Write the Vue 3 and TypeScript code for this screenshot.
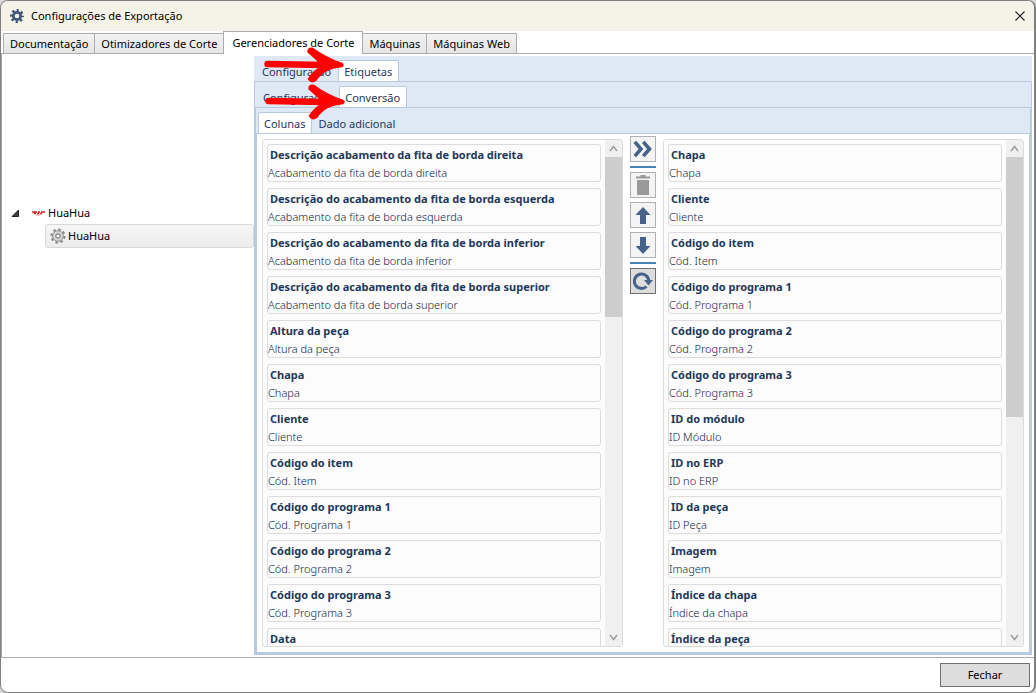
<script setup lang="ts">
interface Column {
  title: string
  label?: string
}

interface Tab {
  name: string
  active: boolean
}

const mainTabs: Tab[] = [
  { name: 'Documentação', active: false },
  { name: 'Otimizadores de Corte', active: false },
  { name: 'Gerenciadores de Corte', active: true },
  { name: 'Máquinas', active: false },
  { name: 'Máquinas Web', active: false },
]

const available: Column[] = [
  { title: 'Descrição acabamento da fita de borda direita', label: 'Acabamento da fita de borda direita' },
  { title: 'Descrição do acabamento da fita de borda esquerda', label: 'Acabamento da fita de borda esquerda' },
  { title: 'Descrição do acabamento da fita de borda inferior', label: 'Acabamento da fita de borda inferior' },
  { title: 'Descrição do acabamento da fita de borda superior', label: 'Acabamento da fita de borda superior' },
  { title: 'Altura da peça', label: 'Altura da peça' },
  { title: 'Chapa', label: 'Chapa' },
  { title: 'Cliente', label: 'Cliente' },
  { title: 'Código do item', label: 'Cód. Item' },
  { title: 'Código do programa 1', label: 'Cód. Programa 1' },
  { title: 'Código do programa 2', label: 'Cód. Programa 2' },
  { title: 'Código do programa 3', label: 'Cód. Programa 3' },
  { title: 'Data' },
]

const chosen: Column[] = [
  { title: 'Chapa', label: 'Chapa' },
  { title: 'Cliente', label: 'Cliente' },
  { title: 'Código do item', label: 'Cód. Item' },
  { title: 'Código do programa 1', label: 'Cód. Programa 1' },
  { title: 'Código do programa 2', label: 'Cód. Programa 2' },
  { title: 'Código do programa 3', label: 'Cód. Programa 3' },
  { title: 'ID do módulo', label: 'ID Módulo' },
  { title: 'ID no ERP', label: 'ID no ERP' },
  { title: 'ID da peça', label: 'ID Peça' },
  { title: 'Imagem', label: 'Imagem' },
  { title: 'Índice da chapa', label: 'Índice da chapa' },
  { title: 'Índice da peça' },
]

const lists = [
  { name: 'Colunas disponíveis', items: available, thumb: 34 },
  { name: 'Colunas escolhidas', items: chosen, thumb: 55 },
]

const pointers = ['first', 'second']
</script>

<template>
  <div class="window">
    <header class="titlebar">
      <svg class="app-icon" width="14" height="14" viewBox="0 0 14 14">
        <circle cx="7" cy="7" r="3.7" fill="none" stroke="#3f5878" stroke-width="2.8" />
        <circle cx="7" cy="7" r="5.7" fill="none" stroke="#3f5878" stroke-width="2.6" stroke-dasharray="2.24 2.24" stroke-dashoffset="1.12" />
      </svg>
      <h1>Configurações de Exportação</h1>
      <button class="close" aria-label="Fechar janela">
        <svg width="10" height="10" viewBox="0 0 10 10"><path d="M0.5 0.5L9.5 9.5M9.5 0.5L0.5 9.5" stroke="#222" stroke-width="1.1" /></svg>
      </button>
    </header>

    <nav class="main-tabs" role="tablist">
      <button v-for="t in mainTabs" :key="t.name" role="tab" :aria-selected="t.active" :class="{ active: t.active }">{{ t.name }}</button>
    </nav>

    <main class="body">
      <aside class="tree">
        <div class="node root">
          <svg width="9" height="9" viewBox="0 0 9 9"><path d="M7.5 1V7.5H1Z" fill="#404040" stroke="#222" /></svg>
          <svg class="brand" width="13" height="5" viewBox="0 0 13 5">
            <path d="M0 1H5M6 1H8M9 1H13M2 2.5H4M5 2.5H7M8 2.5H10" stroke="#cf1f1f" stroke-width="1.3" />
            <path d="M4 4H8" stroke="#e59a9a" />
          </svg>
          <span>HuaHua</span>
        </div>
        <div class="node child">
          <svg width="16" height="16" viewBox="0 0 16 16">
            <circle cx="8" cy="8" r="6.6" fill="none" stroke="#858585" stroke-width="2" stroke-dasharray="2.6 2.58" />
            <circle cx="8" cy="8" r="5.3" fill="#d8d8d8" stroke="#8c8c8c" />
            <circle cx="8" cy="8" r="2.2" fill="#f4f4f4" stroke="#858585" stroke-width="1.2" />
          </svg>
          <span>HuaHua</span>
        </div>
      </aside>

      <section class="level one">
        <nav class="sub-tabs" role="tablist">
          <button role="tab">Configuração</button>
          <button role="tab" class="active" aria-selected="true">Etiquetas</button>
        </nav>
        <div class="frame">
          <section class="level">
            <nav class="sub-tabs" role="tablist">
              <button role="tab">Configuração</button>
              <button role="tab" class="active" aria-selected="true">Conversão</button>
            </nav>
            <div class="frame">
              <section class="level">
                <nav class="sub-tabs" role="tablist">
                  <button role="tab" class="active" aria-selected="true">Colunas</button>
                  <button role="tab">Dado adicional</button>
                </nav>
                <div class="frame columns">
                  <div v-for="(list, i) in lists" :key="list.name" class="list" :class="{ right: i === 1 }">
                    <ul :aria-label="list.name">
                      <li v-for="item in list.items" :key="item.title">
                        <strong>{{ item.title }}</strong>
                        <span v-if="item.label">{{ item.label }}</span>
                      </li>
                    </ul>
                    <div class="scrollbar">
                      <button aria-label="Rolar para cima">
                        <svg width="9" height="7" viewBox="0 0 9 7"><path d="M1 6L4.500 1.500L8 6" fill="none" stroke="#9a9a9a" stroke-width="1.400" /></svg>
                      </button>
                      <div class="track"><div class="thumb" :style="{ height: list.thumb + '%' }"></div></div>
                      <button aria-label="Rolar para baixo">
                        <svg width="9" height="7" viewBox="0 0 9 7"><path d="M1 1L4.500 5.500L8 1" fill="none" stroke="#9a9a9a" stroke-width="1.400" /></svg>
                      </button>
                    </div>
                  </div>
                  <div class="tools">
                    <button aria-label="Adicionar todas">
                      <svg width="20" height="18" viewBox="0 0 20 18"><path d="M1.800 1.800L8 9L1.800 16.200M10.300 1.800L16.500 9L10.300 16.200" fill="none" stroke="#46618a" stroke-width="3.600" /></svg>
                    </button>
                    <hr />
                    <button aria-label="Excluir" disabled>
                      <svg width="14" height="20" viewBox="0 0 14 20"><path d="M0 1.500H4.500V0H9.500V1.500H14V3.500H0ZM1 5H13V20H1Z" fill="#999" /></svg>
                    </button>
                    <button aria-label="Mover para cima">
                      <svg width="16" height="17" viewBox="0 0 16 17"><path d="M8 0L15.500 8H11V17H5V8H0.500Z" fill="#46618a" /></svg>
                    </button>
                    <button aria-label="Mover para baixo">
                      <svg width="16" height="17" viewBox="0 0 16 17"><path d="M8 17L15.500 9H11V0H5V9H0.500Z" fill="#46618a" /></svg>
                    </button>
                    <hr />
                    <button aria-label="Recarregar" class="focused">
                      <svg width="20" height="18" viewBox="0 0 20 18">
                        <path d="M13.500 14.500A7.200 7.200 0 1 1 15.800 9" fill="none" stroke="#46618a" stroke-width="3" />
                        <path d="M11 8H20L15.500 13.500Z" fill="#46618a" />
                      </svg>
                    </button>
                  </div>
                </div>
              </section>
            </div>
          </section>
        </div>
        <svg v-for="p in pointers" :key="p" class="pointer" :class="p" width="82" height="38" viewBox="0 0 82 38">
          <path d="M4.500 18L62 19" fill="none" stroke="#fe0000" stroke-width="6.400" stroke-linecap="round" />
          <path d="M50 2.500C56 7 66 13 79 17.500Q81 19 79 20.500C66 22 59 25 52.500 34.500Q48 37.500 45.500 33Q49 27 56 22V16Q52 12 45 6Q45 1 50 2.500Z" fill="#fe0000" stroke="#fe0000" stroke-width="1.500" stroke-linejoin="round" />
        </svg>
      </section>
    </main>

    <footer><button>Fechar</button></footer>
  </div>
</template>

<style>
body {
  background: #d8d8d8;
}
</style>

<style scoped>
* {
  box-sizing: border-box;
}
.window {
  height: 100vh;
  display: flex;
  flex-direction: column;
  overflow: hidden;
  background: #fff;
  border: 1px solid #808080;
  border-right-width: 2px;
  border-radius: 8px;
  font: 11px/16px "Noto Sans", "Open Sans", sans-serif;
  color: #000;
}
button {
  font: inherit;
  color: inherit;
  padding: 0;
  margin: 0;
  white-space: nowrap;
}
svg {
  display: block;
  flex: none;
}
.titlebar {
  display: flex;
  align-items: center;
  height: 30px;
  flex: none;
  padding: 0 9px;
  background: #f5f2e7;
}
h1 {
  flex: 1;
  margin: 0 0 0 7px;
  font-size: 11px;
  line-height: 16px;
  font-weight: 400;
}
.close {
  display: flex;
  border: 0;
  background: none;
}
.main-tabs {
  display: flex;
  align-items: flex-end;
  height: 23px;
  flex: none;
  padding: 0 2px;
  border-bottom: 1px solid #acacac;
}
.main-tabs button {
  height: 20px;
  padding: 0 6px;
  border: 1px solid #acacac;
  border-bottom: 0;
  margin-right: -1px;
  background: linear-gradient(#f2f2f2, #e6e6e6);
}
.main-tabs .active {
  height: 23px;
  padding: 0 8px;
  margin-bottom: -1px;
  background: #fff;
  z-index: 1;
}
.body {
  flex: 1;
  min-height: 0;
  display: flex;
  padding: 2px 2px 2px 0;
  border-left: 1px solid #acacac;
  border-bottom: 1px solid #acacac;
}
.tree {
  width: 252px;
  flex: none;
  padding-top: 146px;
}
.node {
  display: flex;
  align-items: center;
  height: 22px;
}
.root {
  padding-left: 9px;
  gap: 3px;
}
.brand {
  margin-left: 9px;
}
.child {
  height: 24px;
  margin-left: 43px;
  padding-left: 4px;
  gap: 2px;
  border: 1px solid #d9d9d9;
  border-radius: 3px;
  background: linear-gradient(#f6f6f6, #ececec);
}
.level {
  flex: 1;
  min-width: 0;
  display: flex;
  flex-direction: column;
  color: #1e395b;
}
.one {
  position: relative;
}
.sub-tabs {
  display: flex;
  align-items: flex-end;
  height: 25px;
  flex: none;
  padding-left: 2px;
  background: #dfe8f5;
}
.sub-tabs button {
  height: 22px;
  margin-bottom: -1px;
  padding: 0 6px 0 5px;
  border: 1px solid transparent;
  border-bottom: 0;
  background: none;
}
.sub-tabs .active {
  border-color: #b9c9de;
  border-radius: 2px 2px 0 0;
  background: #fff;
}
.frame {
  flex: 1;
  min-height: 0;
  display: flex;
  border: 1px solid #b9c9de;
}
.columns {
  padding: 2px 5px 5px;
  gap: 7px;
}
.list {
  flex: 1;
  min-width: 0;
  display: flex;
  margin-top: 3px;
  border: 1px solid #dcdcdc;
  border-radius: 3px;
  background: #fcfcfc;
  overflow: hidden;
}
.right {
  order: 3;
}
ul {
  flex: 1;
  min-width: 0;
  min-height: 0;
  margin: 0;
  padding: 4px;
  list-style: none;
  display: flex;
  flex-direction: column;
  gap: 6px;
  overflow: hidden;
}
li {
  height: 38px;
  flex: none;
  display: flex;
  flex-direction: column;
  gap: 3px;
  padding: 2px 0 0;
  border: 1px solid #dcdcdc;
  border-radius: 3px;
  line-height: 15px;
  white-space: nowrap;
}
li strong {
  padding-left: 2px;
  font-weight: 700;
}
li span {
  font-weight: 300;
  color: #0c2444;
}
.scrollbar {
  width: 17px;
  flex: none;
  display: flex;
  flex-direction: column;
  background: #f0f0f0;
}
.scrollbar button {
  height: 17px;
  display: flex;
  align-items: center;
  justify-content: center;
  border: 0;
  background: none;
}
.track {
  flex: 1;
}
.thumb {
  background: #cdcdcd;
}
.tools {
  order: 2;
  width: 26px;
  flex: none;
  display: flex;
  flex-direction: column;
  gap: 4px;
}
.tools button {
  height: 26px;
  display: flex;
  align-items: center;
  justify-content: center;
  border: 1px solid #adb2b5;
  background: #f4f4f4;
}
.tools .focused {
  border-color: #707070;
  background: #ddd;
}
hr {
  width: 100%;
  height: 2px;
  margin: 0;
  border: 0;
  background: #4682b4;
}
.pointer {
  position: absolute;
  z-index: 2;
  left: 9px;
}
.first {
  top: -10px;
}
.second {
  top: 27px;
  left: 10px;
}
footer {
  height: 34px;
  flex: none;
  display: flex;
  justify-content: flex-end;
  padding: 5px 4px;
}
footer button {
  width: 90px;
  border: 1px solid #707070;
  background: #ddd;
}
</style>
